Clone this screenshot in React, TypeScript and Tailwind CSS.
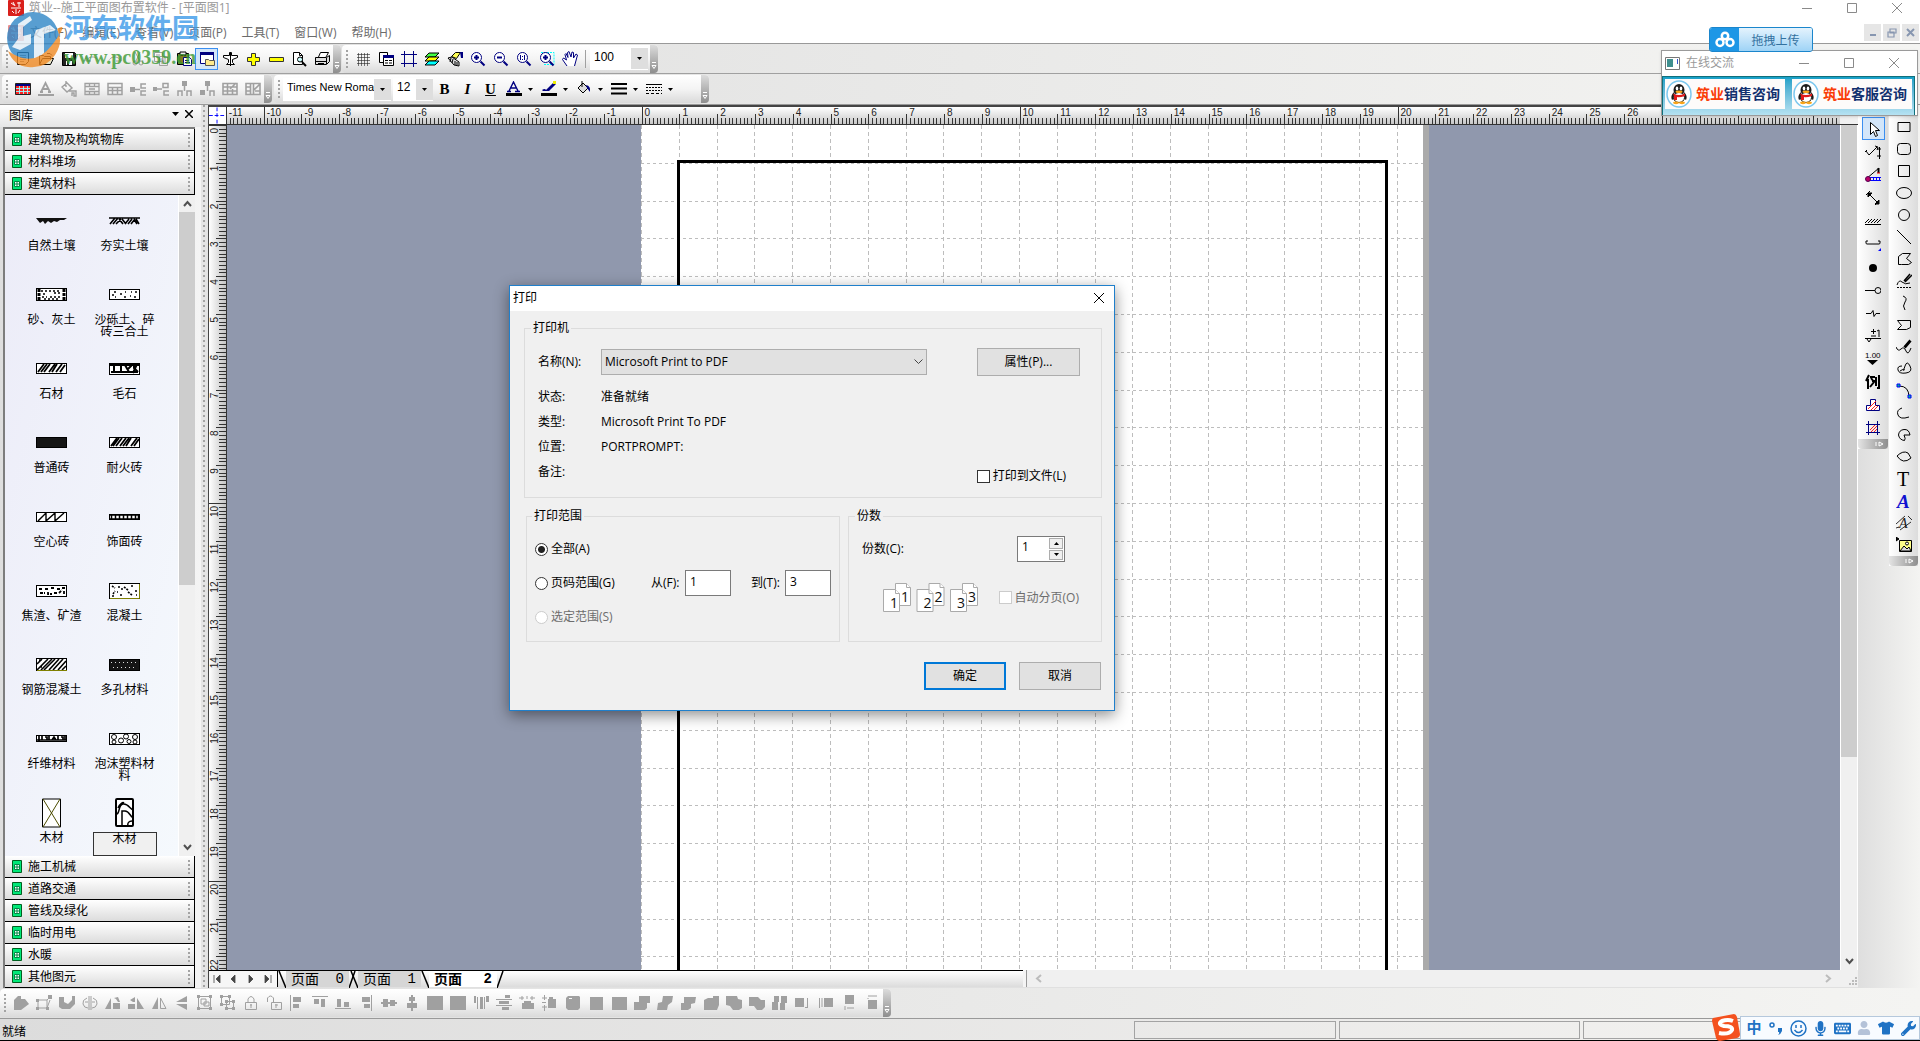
import React from 'react';
import { FaMicrophone, FaKeyboard, FaTshirt, FaWrench, FaUser } from 'react-icons/fa';

const CM = 37.795;

const Ico = ({ children, w = 16, h = 16 }: { children: React.ReactNode; w?: number; h?: number }) => (
  <svg width={w} height={h} viewBox={`0 0 ${w} ${h}`} fill="none" stroke="#000" className="shrink-0">
    {children}
  </svg>
);

const G = '#a0a0a0';
const NAVY = '#000080';

const ToolButton = ({ label, active, children }: { label: string; active?: boolean; children: React.ReactNode }) => (
  <button
    type="button"
    aria-label={label}
    className={`flex h-[22px] w-[23px] shrink-0 items-center justify-center ${active ? 'border border-[#3c8ff0] bg-[#d3e6fa]' : ''}`}
  >
    {children}
  </button>
);

const Grip = () => (
  <div className="flex w-[9px] shrink-0 flex-col items-center gap-[2px]">
    {[0, 1, 2, 3, 4].map((i) => (
      <span key={i} className="h-[2px] w-[2px] bg-[#a3a3a3]" />
    ))}
  </div>
);

const StripEnd = () => (
  <div className="flex h-full w-2 shrink-0 items-end justify-center rounded-r-sm bg-linear-to-b from-[#dcdcdc] to-[#8e8e8e] pb-[3px]">
    <svg width="6" height="8" viewBox="0 0 6 8" fill="none" stroke="#fff">
      <path d="M1 .5h4M1 3.500h4l-2 3z" />
    </svg>
  </div>
);

const Strip = ({ children }: { children: React.ReactNode }) => (
  <div className="flex h-[28px] items-center rounded bg-linear-to-b from-white via-[#f4f4f4] to-[#dadada]">
    <Grip />
    {children}
    <StripEnd />
  </div>
);

const Caret = () => (
  <svg width="5" height="3" viewBox="0 0 5 3">
    <path d="M0 0h5L2.500 3z" fill="#000" />
  </svg>
);

const Combo = ({ label, value, className }: { label: string; value: string; className: string }) => (
  <div className={`relative h-[23px] shrink-0 bg-white ${className}`}>
    <select
      aria-label={label}
      className="h-full w-full appearance-none overflow-hidden bg-white pr-[17px] pb-1 pl-1 leading-4"
    >
      <option>{value}</option>
    </select>
    <span className="pointer-events-none absolute inset-y-px right-0 flex w-[17px] items-center justify-center bg-[#dedede]">
      <Caret />
    </span>
  </div>
);

const FILE_TOOLS: { label: string; active?: boolean; icon: React.ReactNode }[] = [
  { label: '新建', icon: <g><path d="M2.500 1.500h11v9l-3 3h-8z" fill="#fff" /><path d="M5 4.500h6M5 6.500h6M5 8.500h6M5 10.500h4" stroke="#888" /></g> },
  { label: '打开', icon: <g><path d="M1.500 13.500v-9h4l1 1h6v3M1.500 13.500l3-6h11l-3 6z" fill="#e6e3c8" /><path d="M9 2.500h3l2 2" /></g> },
  { label: '保存', icon: <g><path d="M1.500 1.500h12l1 1v12h-13z" fill="#222" /><path d="M4 2h8v5H4zM5 10h6v4H5z" fill="#fff" stroke="none" /><path d="M6 10h2v4H6z" fill="#222" stroke="none" /></g> },
  { label: '撤销', icon: <path d="M2 5v5h5M2.500 9.500c2-4 8-5 11-1" stroke={G} /> },
  { label: '重做', icon: <path d="M14 5v5H9M13.500 9.500c-2-4-8-5-11-1" stroke={G} /> },
  { label: '剪切', icon: <path d="M5 1l5 9M10 1L6 10M3 12a2 2 0 104 0 2 2 0 10-4 0M9 12a2 2 0 104 0 2 2 0 10-4 0" stroke={G} /> },
  { label: '复制', icon: <path d="M1.500 1.500h8v9h-8zM6.500 5.500h8v9h-8zM3 4h4M3 6h3M8 8h5M8 10h5M8 12h5" stroke={G} /> },
  { label: '粘贴', icon: <g><path d="M1.500 2.500h11v11h-11z" fill="#807a20" /><path d="M4 1h6v3H4z" fill="#eee" /><path d="M7.500 6.500h6l2 2v6h-8z" fill="#fff" stroke={NAVY} /><path d="M9 9.500h4M9 11.500h5" stroke={NAVY} /></g> },
  { label: '图库窗口', active: true, icon: <g><path d="M1.500 1.500h13v11h-13z" fill="#fff" stroke={NAVY} /><path d="M1 1h14v3H1z" fill={NAVY} stroke="none" /><path d="M6.500 14.500v-6h3l1 1h5v5z" fill="#ffe98a" stroke="#555" /></g> },
  { label: '飞机', icon: <path d="M7.500 1.500h2v3h6v2l-5 2v3l2 2h-8l2-2v-3l-5-2v-2h6zM8.500 1v14" fill="#fff" /> },
  { label: '放大步进', icon: <path d="M6.500 2.500h4v4h4v4h-4v4h-4v-4h-4v-4h4z" fill="#ff0" stroke="#333" /> },
  { label: '缩小步进', icon: <path d="M1.500 6.500h14v4h-14z" fill="#ff0" stroke="#333" /> },
  { label: '打印预览', icon: <g><path d="M2.500 1.500h6l3 3v9h-9z" fill="#fff" /><path d="M8.500 1.500v3h3" /><circle cx="9" cy="8.500" r="2.500" fill="#cff" /><path d="M11 11l4 4" strokeWidth="2" /></g> },
  { label: '打印', icon: <g><path d="M4.500 6l2-4.500h8L12 6" fill="#fff" /><path d="M1.500 6.500h11l3-2v6l-3 3h-11z" fill="#ddd" /><path d="M2 10.500h10M4 12.500h6M12.500 7v6" /></g> },
];

const VIEW_TOOLS: { label: string; icon: React.ReactNode }[] = [
  { label: '网格', icon: <path d="M3.500 2v13M6.500 2v13M9.500 2v13M12.500 2v13M2 3.500h13M2 6.500h13M2 9.500h13M2 12.500h13" stroke="#222" strokeWidth=".6" /> },
  { label: '图层属性', icon: <g><path d="M1.500 1.500h8v10h-8z" fill="#fff" /><path d="M5.500 4.500h10v10h-10z" fill="#fff" /><path d="M5 4h11v3H5z" fill={NAVY} stroke="none" /><path d="M7 9.500h3M11 9.500h3M7 12h3M11 12h3" /></g> },
  { label: '框线', icon: <path d="M3.500 0v16M12.500 0v16M0 3.500h16M0 12.500h16" stroke={NAVY} /> },
  { label: '图层', icon: <g><path d="M5 2h10l-4 4H1z" fill="#4f4" /><path d="M5 6h10l-4 4H1z" fill="#ff0" /><path d="M5 10h10l-4 4H1z" fill="#0ff" /></g> },
  { label: '格式', icon: <g><path d="M4.500 5.500l4-4h5l-4 6z" fill="#ff5" /><path d="M1 7l4-1 7 5v4l-5-1z" fill="#ddd" /><path d="M13 1h3v6h-2z" fill={NAVY} stroke="none" /><path d="M4 7l-1 4M6 8l-1 4M8 10v4M10 11v3" /></g> },
  { label: '放大', icon: <g stroke={NAVY}><circle cx="6.500" cy="6.500" r="5" fill="#fff" /><path d="M4 6.500h5M6.500 4v5M10.500 10.500l4 4" strokeWidth="2" /></g> },
  { label: '缩小', icon: <g stroke={NAVY}><circle cx="6.500" cy="6.500" r="5" fill="#fff" /><path d="M4 6.500h5M10.500 10.500l4 4" strokeWidth="2" /></g> },
  { label: '原始大小', icon: <g stroke={NAVY}><circle cx="6.500" cy="6.500" r="5" fill="#fff" /><path d="M4.500 4v5M6.500 5v1M6.500 8v1M8.500 4v5" /><path d="M10.500 10.500l4 4" strokeWidth="2" /></g> },
  { label: '窗口缩放', icon: <g stroke={NAVY}><path d="M2 1.500h13v12H4" stroke="#0ff" strokeDasharray="2 1" /><circle cx="6.500" cy="6.500" r="5" fill="#fff" /><path d="M4 6.500h5M6.500 4v5M10.500 10.500l4 4" strokeWidth="2" /></g> },
  { label: '平移', icon: <path d="M5 15L.5 8.500l1-1.500L4.500 9 3 3.500l1-1 2 4-.5-5 1.500-1L9 6l1-5 1.500.5L11.500 7l2.500-4 1.500 1L12.500 15" fill="#fff" stroke={NAVY} /> },
];

const TABLE_TOOLS: { label: string; icon: React.ReactNode }[] = [
  { label: '表格', icon: <g><path d="M.5 2.500h15v11H.5z" fill="#f22" stroke="#222" /><path d="M1 3h14v2H1z" fill={NAVY} stroke="none" /><path d="M1 7.500h14M1 10.500h14M4.500 5v8M8.500 5v8M12.500 5v8" stroke="#9ff" strokeWidth=".9" /></g> },
  { label: '字体颜色', icon: <path d="M3 11L7.500 2 12 11M4.500 8h6M2 11h3M10 11h3M0 14h16" stroke={G} strokeWidth="1.800" /> },
  { label: '填充', icon: <path d="M1 6l5-4 5 5-5 4zM8 10h7v5h-2v-3h-2v3M5 0v6" stroke={G} strokeWidth="1.400" /> },
  { label: '合并', icon: <path d="M1 2.500h14v11H1zM1 5.500h14M1 10.500h14M5.500 2v4M10.500 2v4M5.500 10v4M10.500 10v4M5 8h6" stroke={G} strokeWidth="1.300" /> },
  { label: '拆分', icon: <path d="M1 2.500h14v11H1zM1 6.500h14M1 9.500h14M5.500 6v8M10.500 6v8" stroke={G} strokeWidth="1.500" /> },
  { label: '左插入', icon: <g stroke={G} strokeWidth="1.500"><path d="M0 6h5v5H0z" fill={G} stroke="none" /><path d="M4 8.500h6M16 3h-5v4h5M16 10h-5v4h5" /></g> },
  { label: '右插入', icon: <g stroke={G} strokeWidth="1.500"><path d="M0 6h4v4H0z" fill={G} stroke="none" /><path d="M4 8h5M10 2.500h5v4h-5zM16 10h-5v4h5" /></g> },
  { label: '上插入', icon: <g stroke={G} strokeWidth="1.500"><path d="M6 0h5v5H6z" fill={G} stroke="none" /><path d="M8.500 5v5M2 15v-5h4v5M11 15v-5h4v5" /></g> },
  { label: '下插入', icon: <g stroke={G} strokeWidth="1.500"><path d="M6 0h5v5H6zM1 9h5v5H1z" fill={G} stroke="none" /><path d="M8.500 5v5M11 15v-5h4v5" /></g> },
  { label: '编辑行', icon: <path d="M1 2.500h14v11H1zM1 6h14M1 10h14M5.500 3v10M10.500 8v6M8 8l6-6" stroke={G} strokeWidth="1.600" /> },
  { label: '编辑列', icon: <path d="M1 2.500h14v11H1zM5.500 2v12M8.500 2v12M1 6h5M1 10h5M9 9l6-6M10 10h5" stroke={G} strokeWidth="1.600" /> },
];

// arrange toolbar, all disabled: f is filled, s is stroked
const ARRANGE: { label: string; f?: string; s?: string }[] = [
  { label: '编辑形状', f: 'M1 5l4-4h3v3h4l4 5-4 3-4 3H1z' },
  { label: '节点', f: 'M12 0h4v4h-4zM0 4h3v3H0zM0 12h3v3H0zM10 12h3v3h-3z', s: 'M2 5h9v8H2zM11 5l3-3M11 13l3-8' },
  { label: '切角', f: 'M0 2h5v5l4 2 4-4V1h3v8l-5 5H3L0 12z' },
  { label: '任意旋转', s: 'M7 1v14M9 1v14M5 3Q0 5 1 9t5 4M11 3q5 2 4 6t-5 4M3 7h3M10 7h3' },
  { label: '左旋', f: 'M0 14L6 3v11zM8 8h7v6H8zM9 3l4-1 2 5h-2l-2-3z' },
  { label: '右旋', f: 'M9 14V3l7 11zM0 9h7v5H0zM2 5l5-3v5H5z' },
  { label: '水平翻转', f: 'M1 14L7 2v12z', s: 'M9.500 3v10.500H15z' },
  { label: '垂直翻转', f: 'M13 1v6H2zM2 9h11v6z' },
  { label: '组合', f: 'M0 0h3v3H0zM12 0h3v3h-3zM0 12h3v3H0zM12 12h3v3h-3z', s: 'M1.500 1.500h12v12h-12zM4 4h5v5H4zM7 7h5v4H7z' },
  { label: '取消组合', f: 'M0 0h3v3H0zM8 0h3v3H8zM0 8h3v3H0zM5 5h3v3H5zM12 5h3v3h-3zM5 12h3v3H5zM12 12h3v3h-3z', s: 'M1.500 1.500h8v8h-8zM6.500 6.500h7v7h-7z' },
  { label: '锁定', s: 'M2.500 7.500h11v7h-11zM5 7V4q3-5 6 0v3M8 9v4M7 10h2' },
  { label: '解锁', s: 'M5.500 7.500h10v7h-10zM1.500 7V3q3-4 6 0v4M10 9v4M9 10h3' },
  { label: '左对齐', f: 'M1 0h1v16H1zM4 2h8v5H4zM4 9h6v4H4z' },
  { label: '顶对齐', f: 'M0 1h16v1H0zM2 4h5v5H2zM9 4h4v8H9z' },
  { label: '底对齐', f: 'M0 13h16v1H0zM2 4h4v8H2zM9 7h5v5H9z' },
  { label: '右对齐', f: 'M13 0h1v16h-1zM4 2h8v5H4zM6 9h6v4H6z' },
  { label: '水平居中', f: 'M0 7h16v2H0zM2 4h5v8H2zM9 5h5v6H9z' },
  { label: '垂直居中', f: 'M7 0h2v16H7zM5 2h6v4H5zM3 8h10v5H3z' },
  { label: '填充一', f: 'M0 1h16v14H0z' },
  { label: '填充二', f: 'M0 1h16v14H0z' },
  { label: '水平分布', f: 'M1 1h2v7H1zM7 2h3v12H7zM13 1h3v6h-3z', s: 'M4.500 2v12M11.500 2v12' },
  { label: '垂直分布', f: 'M9 0h5v3H9zM3 6h10v3H3zM6 12h7v3H6z', s: 'M0 4.500h16M0 10.500h16' },
  { label: '等宽', f: 'M5 6h7v2h3v6H3V8h2z', s: 'M0 3h5M11 3h5M3 1v4M13 1v4M8 1v3' },
  { label: '等高', f: 'M7 2h4v2h3v9H6V4h1z', s: 'M2.500 0v5M0 3h5M2.500 10v6M0 12h5M0 7.500h4' },
  { label: '等大', f: 'M1 3l2-2h11l1 1v11l-2 2H3l-2-2zM4 3v1h3V3z' },
  { label: '方形', f: 'M2 2h13v13H2z' },
  { label: '方形二', f: 'M1 2h15v13H1z' },
  { label: '联合', f: 'M5 1h11v7h-3v5l-2 2H0V7h5z' },
  { label: '组合形', f: 'M6 1h10l-1 6-4 3-1 5H0l1-7 4-1z' },
  { label: '拆分形', f: 'M4 2h12l-1 6-4 1v4l-3 2H1V8h3z' },
  { label: '相交', f: 'M5 3h5V1h6v9l-2 5H1V5z' },
  { label: '剪除', f: 'M0 1h11l1 3 4 1v8l-3 2H7l-3-4-4-1z' },
  { label: '切除', f: 'M0 2h9l3 3h4v7l-3 3H8l-3-4H0z' },
  { label: '打断', f: 'M2 1h5v6H6v8H0V7h2zM9 1h6v7h-2v7H8V8h1z' },
  { label: '右移', f: 'M0 3h9v9H0z', s: 'M12.500 3v10M10 12.500h3' },
  { label: '左移', f: 'M6 3h9v9H6z', s: 'M1.500 3v10M4 3v9' },
  { label: '下移', f: 'M4 0h9v9H4z', s: 'M4 11v4M6 13h7' },
  { label: '上移', f: 'M4 5h9v9H4z', s: 'M4 1h9M4 3v1' },
];

const LIBRARIES_TOP = ['建筑物及构筑物库', '材料堆场', '建筑材料'];
const LIBRARIES_BOTTOM = ['施工机械', '道路交通', '管线及绿化', '临时用电', '水暖', '其他图元'];

const Box = ({ children, h = 10, fill = '#fff' }: { children?: React.ReactNode; h?: number; fill?: string }) => (
  <g>
    <rect x=".5" y=".5" width="30" height={h} fill={fill} />
    {children}
  </g>
);

const MATERIALS: { name: string; w?: number; h?: number; selected?: boolean; art: React.ReactNode }[] = [
  { name: '自然土壤', h: 6, art: <path d="M0 0h31l-3 2h-4l-3 2-3-1-3 2-3-2-3 3-2-3-3 2z" fill="#111" stroke="none" /> },
  { name: '夯实土壤', h: 8, art: <path d="M0 1h31M1 7l5-6M4 7l5-6M7 7l5-5M10 2l4 5M13 2l4 5M16 7l4-5M19 7l4-5M22 7l4-5M27 2l3 5M25 2l3 5" strokeWidth="1.600" /> },
  { name: '砂、灰土', h: 13, art: <Box h={12}><path d="M3 1v11M28 1v11" strokeWidth="3" strokeDasharray="3 1" /><path d="M5 3h20M7 6h4M18 5h6M6 9h5M14 9h10M8 11h16" strokeWidth="1.600" strokeDasharray="2 2" /></Box> },
  { name: '沙砾土、碎砖三合土', h: 11, art: <Box><path d="M5 3h2M3 6h2M11 5h2M15 8h2M16 3h1M22 3h1M21 7h1M26 3h2M25 8h2M6 8h1" strokeWidth="1.400" /></Box> },
  { name: '石材', h: 11, art: <Box><path d="M2 9l6-8M5 9l6-8M8 9l6-8M13 9l6-8M16 9l5-8M20 9l6-8M24 9l5-7" strokeWidth="1.800" /></Box> },
  { name: '毛石', h: 12, art: <Box h={11}><path d="M1 2h29M2 9h27M5 1v9M12 2v8M16 2l4 7M23 2l-5 5M25 2v3l4 4M28 1l-4 9" strokeWidth="2" /></Box> },
  { name: '普通砖', h: 11, art: <Box fill="#151515" /> },
  { name: '耐火砖', h: 11, art: <Box><path d="M2 9l6-8M4 9l6-8M7 9l6-8M11 9l6-8M14 9l6-8M17 9l5-8M22 9l6-8M25 9l5-7" strokeWidth="1.800" /></Box> },
  { name: '空心砖', h: 10, art: <Box h={9}><path d="M2 9l8-8v8l9-8v8l9-8" strokeWidth="1.400" /></Box> },
  { name: '饰面砖', h: 6, art: <Box h={5}><path d="M2.500 0v5M6.500 0v5M10.500 0v5M14.500 0v5M18.500 0v5M22.500 0v5M26.500 0v5M29.500 0v5M0 1h31M0 5h31" strokeWidth="1.500" /></Box> },
  { name: '焦渣、矿渣', h: 12, art: <Box h={11}><path d="M3 4h4M9 4h4M15 3h3M21 4h3M26 3h3M4 8h5M12 7v2h4M18 8h3M23 8l3-3M28 6v3" strokeWidth="1.800" strokeDasharray="3 1" /></Box> },
  { name: '混凝土', h: 16, art: <Box h={15}><path d="M3 3l3 2M9 4h2M15 4l4 3M22 3h3M4 11l2-3M12 6h2M11 12h2M19 9l4 3M26 8h3M27 12h1M3 13h2M8 9h1" strokeWidth="1.600" strokeDasharray="2 1" /><path d="M1 15.500h29.500V1" stroke="#808000" /></Box> },
  { name: '钢筋混凝土', h: 13, art: <Box h={12}><path d="M1 6l5-5M1 12L12 1M5 12L16 1M8 12L19 1M13 12L23 1M17 12L27 1M22 12l8-9M26 12l4-4M3 2h3M4 9h2" strokeWidth="1.600" /><path d="M1 12.500h30" stroke="#808000" /></Box> },
  { name: '多孔材料', h: 12, art: <Box h={11} fill="#151515"><path d="M2 3.500h27M4 8.500h24" stroke="#ddd" strokeDasharray="1 3" /></Box> },
  { name: '纤维材料', h: 7, art: <Box h={6}><path d="M3 1v5M6 1v4M9 2h2v3h2V1M16 5l2-3 2 3M22 1v4M25 2h2v3h2V1M1 5h29" strokeWidth="1.700" /></Box> },
  { name: '泡沫塑料材料', h: 12, art: <Box h={11}><circle cx="5" cy="4" r="2.500" /><circle cx="12" cy="7.500" r="2.500" /><circle cx="17" cy="3.500" r="2.500" /><circle cx="20" cy="8.500" r="2" /><circle cx="26" cy="4" r="2.500" /><circle cx="5" cy="9" r="2" /><circle cx="26" cy="9" r="2" /></Box> },
  { name: '木材', w: 20, h: 30, art: <g><path d="M.5 1h18v28H.5z" fill="#fff" /><path d="M1 1l17 28M18 1L1 29" stroke="#4c4c00" /></g> },
  { name: '木材', w: 20, h: 30, selected: true, art: <g><rect x="1" y="1" width="17" height="27" rx="1" fill="#fff" strokeWidth="2" /><path d="M2 16c3-1 1-9 6-10s7 5 10 6M7 28V13h3c4 0 5 5 8 7M13 28c-1-3 1-5 4-5M3 10c2-5 5-6 6-5" strokeWidth="1.500" /></g> },
];

const Crane = (
  <g>
    <path d="M1 12L14 1" />
    <path d="M2 10.500h14M4 13.500h12" stroke="#00f" />
    <path d="M5 12h11" stroke="#00f" strokeWidth="2" strokeDasharray="1 2" />
    <circle cx="3" cy="12" r="2.500" fill="#b06" stroke="#505" />
    <path d="M13.500 1v5" strokeWidth="2" />
    <path d="M12 6h3" stroke="#e00" />
  </g>
);

const DRAW_TOOLS: { label: string; icon: React.ReactNode }[] = [
  { label: '选择', icon: <path d="M5.500 1.500v12l3-3 2 5 2-1-2-5h4z" fill="#fff" /> },
  { label: '折线标注', icon: <path d="M1 7l3 4 8-8M10 2l3 1-1 3M14.500 3v12M12 5h4M12 12h4M0 8l2-2" /> },
  { label: '塔吊', icon: Crane },
  { label: '尺寸', icon: <g><path d="M4 4l9 9M1 5l4-4M10 15l4-4" /><path d="M3 3h4L3 7zM14 14h-4l4-4z" fill="#000" /></g> },
  { label: '填土', icon: <path d="M0 11.500h16M0 10l4-4M3 10l4-4M6 10l4-4M9 10l4-4M12 10l4-4" /> },
  { label: '围墙', icon: <g><path d="M1 5v2q0 1 1 1h12q1 0 1-1V5M1 5h2M13 5h2" /><path d="M16 12v3h-3z" fill="#00f" stroke="none" /></g> },
  { label: '圆点', icon: <circle cx="8" cy="9" r="4" fill="#000" stroke="none" /> },
  { label: '接点', icon: <path d="M0 8.500h10M10 8.500a3 3 0 106 0 3 3 0 10-6 0" /> },
  { label: '断线', icon: <path d="M1 8.500h5l2-3 1 6 2-3h4" /> },
  { label: '正负标高', icon: <path d="M0 10.500h16M2 11l2 3 2-3M6 3.500h5M8.500 1v5M6 8h5M12 3l2-1v7" /> },
  { label: '标高', icon: <g><text x="0" y="7" fontSize="8" fontFamily="Liberation Sans, sans-serif" fill="#000" stroke="none">1.00</text><path d="M2 9h11l-5.500 5z" fill="#000" stroke="none" /></g> },
  { label: '图例', icon: <path d="M4 1L1 7M3 5v10M5 3h5M6 4l3 4-4 5M7 7h3M11 3v9M14 1v13h-2" strokeWidth="2" /> },
  { label: '楼栋', icon: <g stroke={NAVY}><path d="M5.500 2.500h5v6h4v5h-13v-5h4z" fill="#fff" /><path d="M3 12l8-8M6 13l5-5M9 13l4-4" stroke="#f22" /></g> },
  { label: '轴网', icon: <g stroke={NAVY}><path d="M3.500 1v14M12.500 1v14M1 4.500h14M1 12.500h14" /><path d="M5 10l5-5M6 12l6-6M9 12l3-3" stroke="#f22" /></g> },
];

const SHAPE_TOOLS: { label: string; icon: React.ReactNode }[] = [
  { label: '矩形', icon: <path d="M2 3.500h12v9H2z" /> },
  { label: '圆角矩形', icon: <rect x="1.500" y="2.500" width="13" height="11" rx="3" /> },
  { label: '正方形', icon: <path d="M2.500 2.500h11v11h-11z" /> },
  { label: '椭圆', icon: <ellipse cx="8" cy="8" rx="7.500" ry="5.500" fill="#eee" /> },
  { label: '圆', icon: <circle cx="8" cy="8" r="5.500" /> },
  { label: '直线', icon: <path d="M1 1l14 14" /> },
  { label: '多边形', icon: <path d="M2.500 13.500v-8l4-3h8l-4 5 5 4-3 2h-7z" /> },
  { label: '自由曲线', icon: <g><path d="M1 12q2-6 5-3t8 1" /><path d="M8 8l6-7M9 9l7-7" strokeWidth="1.500" /><path d="M1 14.500h14" strokeDasharray="2 1" /></g> },
  { label: '曲线', icon: <path d="M7 1q5 2 2 6t0 8" /> },
  { label: '旗形', icon: <path d="M1.500 3.500h13v7l-4 2h-9l4-4z" /> },
  { label: '画笔', icon: <g><path d="M0 8q2 5 5 2t5 2 5-3" /><path d="M8 8l6-7M9 9l6-7" strokeWidth="1.500" /></g> },
  { label: '闭合曲线', icon: <path d="M6 5Q1 5 2 9t8 3 4-7-5 0-1 4-4 1" /> },
  { label: '圆弧', icon: <g><path d="M3 3q10 0 10 11" /><path d="M1 1h3v3H1zM12 12h3v3h-3z" fill="#0b8" stroke="#00f" /></g> },
  { label: '弧', icon: <path d="M6 3Q0 5 2 10t11 2" /> },
  { label: '扇形', icon: <path d="M8 8h6Q13 2 8 2.500T2.500 8q1 5 6 5.500Q10 12 8 8z" /> },
  { label: '弓形', icon: <path d="M1 7q6-6 11-3l3 5q-8 7-14-2z" fill="#eee" /> },
  { label: '文字', icon: <text x="1" y="15" fontSize="20" fontFamily="Liberation Serif, serif" fill="#000" stroke="none">T</text> },
  { label: '艺术字', icon: <text x="1" y="15" fontSize="19" fontWeight="bold" fontStyle="italic" fontFamily="Liberation Serif, serif" fill="#1010d0" stroke="none">A</text> },
  { label: '旋转文字', icon: <g><text x="3" y="13" fontSize="14" fontStyle="italic" fontFamily="Liberation Serif, serif" fill="#222" stroke="none">A</text><path d="M0 9l9-8M4 15l11-8M3 12l-3 1M12 1l4 4" strokeWidth=".8" /></g> },
  { label: '图片', icon: <g><path d="M3.500 3.500h12v11h-12z" fill="#ff8" /><circle cx="11" cy="6.500" r="1.500" fill="#fff" /><path d="M4 14l4-5 3 3 2-2 2 4z" fill="#ddd" /><path d="M0 0v4l3-2z" fill="#000" /></g> },
];

const TopRuler = () => {
  const zero = 414.6;
  const ticks: string[] = [];
  for (let i = -120; i < 440; i++) {
    const x = Math.round(zero + (i * CM) / 10) + 0.5;
    const top = i % 100 === 0 ? 0 : i % 10 === 0 ? 7 : 11;
    ticks.push(`M${x} ${top}V18`);
  }
  return (
    <svg className="h-[18px] min-w-0 flex-1" role="img" aria-label="水平标尺">
      <path d={ticks.join('')} stroke="#333" fill="none" />
      {Array.from({ length: 42 }, (_, k) => k - 11).map((n) => (
        <text key={n} x={zero + n * CM + 3} y="9" fontSize="10" fontFamily="Liberation Sans, sans-serif" fill="#222">
          {n}
        </text>
      ))}
    </svg>
  );
};

const SideRuler = () => {
  const ticks: string[] = [];
  for (let i = 0; i < 400; i++) {
    const y = Math.round((i * CM) / 10) + 0.5;
    const left = i % 100 === 0 ? 0 : i % 10 === 0 ? 7 : 10;
    ticks.push(`M${left} ${y}H18`);
  }
  return (
    <svg className="h-full w-[17px] shrink-0 bg-linear-to-r from-white to-[#c4c4c4]" role="img" aria-label="垂直标尺">
      <path d={ticks.join('')} stroke="#333" fill="none" />
      {Array.from({ length: 23 }, (_, n) => (
        <text
          key={n}
          transform={`translate(9 ${n * CM + 3}) rotate(-90)`}
          textAnchor="end"
          fontSize="10"
          fontFamily="Liberation Sans, sans-serif"
          fill="#222"
        >
          {n}
        </text>
      ))}
    </svg>
  );
};

const Sheet = () => {
  const vLines = Array.from({ length: 21 }, (_, i) => Math.round(i * CM) + 0.5);
  const hLines = Array.from({ length: 29 }, (_, i) => Math.round((i + 1) * CM) + 0.5);
  return (
    <svg className="ml-[414px] h-full w-[788px] shrink-0" role="img" aria-label="图纸">
      <rect width="782" height="100%" fill="#fff" />
      <rect x="782" width="6" height="100%" fill="#aaa" />
      {vLines.map((x) => (
        <line key={x} x1={x} x2={x} y1="0" y2="1200" stroke="#bdbdbd" strokeDasharray="4 3" />
      ))}
      {hLines.map((y) => (
        <line key={y} x1="0" x2="782" y1={y} y2={y} stroke="#bdbdbd" strokeDasharray="3 3" />
      ))}
      <rect x="37.500" y="36.500" width="708" height="1048" fill="none" stroke="#000" strokeWidth="3" />
    </svg>
  );
};

const LibraryRow = ({ name }: { name: string }) => (
  <button
    type="button"
    className="flex h-[22px] w-full shrink-0 items-center border-r border-b border-black bg-linear-to-b from-white to-[#dcdcdc] pr-1 pl-[7px] text-left text-[12px] leading-4"
  >
    <svg width="10" height="13" viewBox="0 0 10 13" className="mr-[6px]">
      <path d="M.5.5h9v12h-9z" fill="#00e878" stroke="#006020" />
      <path d="M2.500 4.500h5v5h-5z" fill="#fff" stroke="#084" />
      <path d="M5 4v5M2 7h6" stroke="#084" />
    </svg>
    <span className="flex-1">{name}</span>
    <span className="flex flex-col gap-[2px]">
      {[0, 1, 2, 3].map((i) => (
        <span key={i} className="h-[2px] w-[2px] bg-[#a3a3a3]" />
      ))}
    </span>
  </button>
);

const Chevron = ({ d, color = '#505050' }: { d: string; color?: string }) => (
  <svg width="9" height="9" viewBox="0 0 9 9" fill="none" stroke={color} strokeWidth="2">
    <path d={d} />
  </svg>
);

const LibraryPanel = () => (
  <aside className="flex w-[201px] shrink-0 flex-col bg-linear-to-r from-[#dedede] to-[#f4f4f4]">
    <div className="flex h-[22px] shrink-0 items-center bg-linear-to-b from-white to-[#e6e6e6] pr-2 pl-[9px] text-[12px] leading-4">
      <h2 className="flex-1">图库</h2>
      <button type="button" aria-label="选项" className="pr-[6px] pb-1">
        <svg width="7" height="4" viewBox="0 0 7 4"><path d="M0 0h7L3.500 4z" /></svg>
      </button>
      <button type="button" aria-label="关闭图库" className="pb-1">
        <svg width="8" height="8" viewBox="0 0 8 8" stroke="#000" strokeWidth="1.500"><path d="M0 0l8 8M8 0L0 8" /></svg>
      </button>
    </div>
    <div className="mr-[6px] ml-[3px] flex min-h-0 flex-1 flex-col border-t-2 border-l-2 border-[#7d7d7d]">
      {LIBRARIES_TOP.map((n) => <LibraryRow key={n} name={n} />)}
      <div className="flex min-h-0 flex-1">
        <div className="grid min-w-0 flex-1 auto-rows-[74px] grid-cols-[73px_73px] content-start justify-items-center overflow-hidden bg-linear-to-br from-[#ececf8] to-[#f5f9fd] pl-[10px]">
          {MATERIALS.map((m, i) => (
            <button type="button" key={i} className="flex w-16 flex-col items-center text-[12px] leading-3">
              <span className="flex h-[45px] items-center pt-[6px]">
                <Ico w={m.w ?? 31} h={m.h ?? 12}>{m.art}</Ico>
              </span>
              <span className={m.selected ? 'h-6 w-full border border-[#333] bg-[#f0f0f0]' : 'w-[60px]'}>{m.name}</span>
            </button>
          ))}
        </div>
        <div className="flex w-[17px] shrink-0 flex-col items-center border-l border-white bg-[#f0f0f0]">
          <div className="flex h-[17px] shrink-0 items-center"><Chevron d="M1 7l3.500-4L8 7" /></div>
          <div className="w-full basis-[373px] bg-[#cdcdcd]" />
          <div className="min-h-0 flex-1" />
          <div className="flex h-[17px] shrink-0 items-center"><Chevron d="M1 2l3.500 4L8 2" /></div>
        </div>
      </div>
      {LIBRARIES_BOTTOM.map((n) => <LibraryRow key={n} name={n} />)}
    </div>
  </aside>
);

const PageTab = ({ n, active }: { n: number; active?: boolean }) => (
  <button type="button" className="flex h-full items-stretch">
    <svg width="8" height="17" viewBox="0 0 8 17" fill="none" stroke="#000" strokeWidth="1.500"><path d="M1 0l7 17" /></svg>
    <span className={`flex items-center justify-between px-[5px] text-[14px] leading-4 ${active ? 'w-[68px] bg-white font-bold' : 'w-[63px] bg-[#d6d6d6]'}`}>
      <span>页面</span>
      <span className="font-['Liberation_Mono',monospace]">{n}</span>
    </span>
    {(active || n === 0) && (
      <svg width="7" height="17" viewBox="0 0 7 17" fill="none" stroke="#000" strokeWidth="1.500" className="-mr-[6px]"><path d="M6 0L0 17" /></svg>
    )}
  </button>
);

const NAV_ARROWS = [
  { label: '第一页', d: 'M1 0v8M7 0v8L3 4z' },
  { label: '上一页', d: 'M5 0v8L1 4z' },
  { label: '下一页', d: 'M2 0v8l4-4z' },
  { label: '最后一页', d: 'M1 0v8l4-4zM7 0v8' },
];

const PageBar = () => (
  <div className="flex h-[18px] shrink-0 border-b border-[#e0e0e0]">
    <div className="flex h-full flex-1 items-stretch border-t border-black bg-linear-to-b from-white to-[#dcdcdc] pr-4">
      <div className="flex items-center border-r border-black bg-[#f6f6f6]">
        {NAV_ARROWS.map((a) => (
          <button type="button" key={a.label} aria-label={a.label} className="flex w-[17px] justify-start pl-1">
            <svg width="8" height="8" viewBox="0 0 8 8" fill="#444" stroke="#444" strokeWidth=".8"><path d={a.d} /></svg>
          </button>
        ))}
      </div>
      <PageTab n={0} />
      <PageTab n={1} />
      <PageTab n={2} active />
    </div>
    <div className="w-1 border-r border-[#999] bg-[#f4f4f4]" />
    <div className="flex flex-1 items-center justify-between bg-[#f0f0f0] px-2">
      <Chevron d="M6 1L2 4.500 6 8" color="#bcbcbc" />
      <Chevron d="M3 1l4 3.500L3 8" color="#bcbcbc" />
    </div>
    <div className="flex w-[18px] items-end justify-end bg-[#f0f0f0] p-px">
      <svg width="9" height="9" viewBox="0 0 9 9" fill="#bbb"><path d="M7 0h2v2H7zM7 3h2v2H7zM4 3h2v2H4zM7 6h2v2H7zM4 6h2v2H4zM1 6h2v2H1z" /></svg>
    </div>
  </div>
);

const Workspace = () => (
  <section className="flex min-w-0 flex-1 flex-col border-t-2 border-l border-[#444] bg-[#9098ad]">
    <div className="flex h-[18px] shrink-0 border-b border-[#333] bg-linear-to-b from-white to-[#c8c8c8]">
      <svg width="18" height="17" viewBox="0 0 18 17" className="shrink-0 border-r border-[#333] bg-white" stroke="#00f" fill="none">
        <path d="M0 8.500h5M12 8.500h5M8.500 0v4M8.500 13v4M6 8.500h5M8.500 6v5" strokeDasharray="4 1" />
      </svg>
      <TopRuler />
      <div className="w-[18px] bg-[#f0f0f0]" />
    </div>
    <div className="flex min-h-0 flex-1">
      <SideRuler />
      <div className="flex min-w-0 flex-1 overflow-hidden border-l border-[#333]">
        <Sheet />
      </div>
      <div className="flex w-[18px] shrink-0 flex-col items-center border-x border-white bg-[#f0f0f0]">
        <div className="w-full basis-[632px] bg-[#cdcdcd]" />
        <div className="min-h-0 flex-1" />
        <div className="flex h-[17px] shrink-0 items-center"><Chevron d="M1 2l3.500 4L8 2" /></div>
      </div>
    </div>
    <PageBar />
  </section>
);

const SideGrip = () => (
  <div className="flex h-[10px] w-full items-center justify-end rounded-b bg-linear-to-r from-[#e4e4e4] to-[#8e8e8e] pr-1">
    <svg width="9" height="6" viewBox="0 0 9 6" stroke="#fff" fill="none"><path d="M1 1v4M4 1v4l4-2z" /></svg>
  </div>
);

const RadioRow = ({ id, text, disabled, checked, children }: { id: string; text: string; disabled?: boolean; checked?: boolean; children?: React.ReactNode }) => (
  <div className="flex h-[34px] items-center">
    <input
      id={id}
      type="radio"
      name="range"
      defaultChecked={checked}
      disabled={disabled}
      className="mr-[3px] h-[13px] w-[13px] appearance-none rounded-full border border-[#333] bg-white checked:bg-[radial-gradient(circle,#222_0_3px,#fff_4px)] disabled:border-[#ccc]"
    />
    <label htmlFor={id} className={`w-[100px] ${disabled ? 'text-[#6d6d6d]' : ''}`}>{text}</label>
    {children}
  </div>
);

const CollatePages = () => (
  <svg width="100" height="31" viewBox="0 0 100 31" role="img" aria-label="逐份打印示意">
    {[0, 1, 2].map((i) => (
      <g key={i} transform={`translate(${i * 33.5} 0)`} stroke="#aaa" fill="#fff" fontFamily="Open Sans, sans-serif" fontSize="14">
        <path d="M13.500 1.500h11l4 4v18h-15z" />
        <path d="M24.500 1.500v4h4" />
        <text x="19" y="20" fill="#111" stroke="none">{i + 1}</text>
        <path d="M1.500 7.500h12l4 4v18h-16z" />
        <path d="M13.500 7.500v4h4" />
        <text x="8" y="26" fill="#111" stroke="none">{i + 1}</text>
      </g>
    ))}
  </svg>
);

const PRINTER_INFO = [
  { k: '状态:', v: '准备就绪' },
  { k: '类型:', v: 'Microsoft Print To PDF' },
  { k: '位置:', v: 'PORTPROMPT:' },
];

const PrintDialog = () => (
  <div
    role="dialog"
    aria-label="打印"
    className="absolute top-[285px] left-[509px] w-[606px] border border-[#1f7fcb] bg-[#f0f0f0] font-['Open_Sans','Noto_Sans_CJK_SC',sans-serif] text-[12px] leading-4 shadow-[0_4px_14px_rgba(0,0,0,0.45)]"
  >
    <div className="flex h-[25px] items-center justify-between bg-white pr-[9px] pb-[2px] pl-[3px]">
      <h2>打印</h2>
      <button type="button" aria-label="关闭">
        <svg width="12" height="12" viewBox="0 0 12 12" stroke="#000"><path d="M1 1l10 10M11 1L1 11" /></svg>
      </button>
    </div>
    <form className="pt-[9px] pr-3 pb-5 pl-[14px]" onSubmit={(e) => e.preventDefault()}>
      <fieldset className="border border-[#dcdcdc] pr-[21px] pb-2 pl-[13px]">
        <legend className="-ml-[7px] px-[2px]">打印机</legend>
        <div className="flex items-center pt-3">
          <label htmlFor="printer" className="w-[63px]">名称(N):</label>
          <div className="relative w-[326px]">
            <select id="printer" className="h-[26px] w-full appearance-none border border-[#adadad] bg-[#e1e1e1] pl-[3px]">
              <option>Microsoft Print to PDF</option>
            </select>
            <svg width="9" height="6" viewBox="0 0 9 6" fill="none" stroke="#444" className="pointer-events-none absolute top-[10px] right-1"><path d="M.5.5l4 4 4-4" /></svg>
          </div>
          <button type="button" className="ml-auto h-7 w-[103px] border border-[#adadad] bg-[#e1e1e1]">属性(P)...</button>
        </div>
        <dl className="pt-2">
          {PRINTER_INFO.map((r) => (
            <div key={r.k} className="flex h-[25px] items-center">
              <dt className="w-[63px]">{r.k}</dt>
              <dd>{r.v}</dd>
            </div>
          ))}
        </dl>
        <div className="flex h-[30px] items-center justify-between pr-[14px]">
          <span className="pb-1">备注:</span>
          <label className="flex items-center gap-[3px] pt-1">
            <input type="checkbox" className="h-[13px] w-[13px] appearance-none border border-[#333] bg-white" />
            打印到文件(L)
          </label>
        </div>
      </fieldset>
      <div className="flex gap-2 pt-[10px] pl-[2px]">
        <fieldset className="w-[313px] border border-[#dcdcdc] px-2 pt-2 pb-[7px]">
          <legend className="-ml-[3px] px-[2px]">打印范围</legend>
          <RadioRow id="all" text="全部(A)" checked />
          <RadioRow id="pages" text="页码范围(G)">
            <label htmlFor="from" className="w-[34px]">从(F):</label>
            <input id="from" defaultValue="1" className="h-[26px] w-[46px] border border-[#7a7a7a] bg-white px-1 pb-1" />
            <label htmlFor="to" className="ml-5 w-[34px]">到(T):</label>
            <input id="to" defaultValue="3" className="h-[26px] w-[46px] border border-[#7a7a7a] bg-white px-1 pb-1" />
          </RadioRow>
          <RadioRow id="selection" text="选定范围(S)" disabled />
        </fieldset>
        <fieldset className="min-w-0 flex-1 border border-[#dcdcdc] pt-3 pr-[22px] pl-[13px]">
          <legend className="-ml-[7px] px-[2px]">份数</legend>
          <div className="flex items-center justify-between pr-[14px]">
            <label htmlFor="copies">份数(C):</label>
            <div className="flex h-[26px] w-12 border border-[#7a7a7a] bg-white">
              <input id="copies" defaultValue="1" className="min-w-0 flex-1 bg-transparent px-1 pb-1" />
              <div className="flex w-4 flex-col gap-px p-px">
                <button type="button" aria-label="增加" className="flex flex-1 items-center justify-center border border-[#adadad] bg-[#f0f0f0]">
                  <svg width="5" height="3" viewBox="0 0 5 3"><path d="M0 3h5L2.500 0z" /></svg>
                </button>
                <button type="button" aria-label="减少" className="flex flex-1 items-center justify-center border border-[#adadad] bg-[#f0f0f0]">
                  <Caret />
                </button>
              </div>
            </div>
          </div>
          <div className="flex items-center justify-between pt-5 pl-5">
            <CollatePages />
            <label className="flex items-center gap-[3px] text-[#6d6d6d]">
              <input type="checkbox" disabled className="h-[13px] w-[13px] appearance-none border border-[#ccc] bg-white" />
              自动分页(O)
            </label>
          </div>
        </fieldset>
      </div>
      <div className="flex justify-end gap-[13px] pt-5 pr-px">
        <button type="submit" className="h-7 w-[82px] border-2 border-[#0078d7] bg-[#e1e1e1]">确定</button>
        <button type="button" className="h-7 w-[82px] border border-[#adadad] bg-[#e1e1e1]">取消</button>
      </div>
    </form>
  </div>
);

const WindowControls = () => (
  <div className="flex items-center gap-[35px] text-[#8a8a8a]">
    <button type="button" aria-label="最小化"><svg width="10" height="10" viewBox="0 0 10 10" stroke="currentColor"><path d="M0 5.500h10" /></svg></button>
    <button type="button" aria-label="最大化"><svg width="10" height="10" viewBox="0 0 10 10" stroke="currentColor" fill="none"><path d="M.5.5h9v9h-9z" /></svg></button>
    <button type="button" aria-label="关闭窗口"><svg width="10" height="10" viewBox="0 0 10 10" stroke="currentColor"><path d="M0 0l10 10M10 0L0 10" /></svg></button>
  </div>
);

const Penguin = () => (
  <svg width="26" height="28" viewBox="0 0 26 28" className="shrink-0">
    <ellipse cx="13" cy="14" rx="12" ry="13" fill="#fff" stroke="#7cc7ee" strokeWidth="1.500" />
    <ellipse cx="13" cy="10" rx="5.500" ry="6" fill="#1c1c1c" />
    <path d="M8 12q-4 4-2 8l3-2M18 12q4 4 2 8l-3-2" fill="#1c1c1c" />
    <ellipse cx="13" cy="17.500" rx="5.500" ry="5" fill="#fff" stroke="#1c1c1c" />
    <ellipse cx="11" cy="8.500" rx="1.300" ry="1.900" fill="#fff" />
    <ellipse cx="15" cy="8.500" rx="1.300" ry="1.900" fill="#fff" />
    <ellipse cx="13" cy="11.800" rx="3.500" ry="1.200" fill="#f9a51a" />
    <path d="M7 13.500q6 3 12 0v2.500q-6 2-8 1v3H8v-4z" fill="#e11b1b" />
    <ellipse cx="10" cy="22.800" rx="3" ry="1.400" fill="#f9a51a" />
    <ellipse cx="16" cy="22.800" rx="3" ry="1.400" fill="#f9a51a" />
  </svg>
);

const ChatWindow = () => (
  <div className="absolute top-[50px] right-[2px] w-[257px] border border-[#9a9a9a] bg-white shadow">
    <div className="flex h-[25px] items-center justify-between pr-[18px] pb-px pl-[3px]">
      <div className="flex items-center gap-[6px] text-[12px] leading-4 text-[#9a9a9a]">
        <svg width="15" height="13" viewBox="0 0 15 13"><path d="M.5.5h14v12H.5z" fill="#fff" stroke="#777" /><path d="M2 2h6v8H2z" fill="#3f8f8f" /><path d="M12 2h1v5h-1z" fill="#35c" /></svg>
        在线交流
      </div>
      <WindowControls />
    </div>
    <div className="mr-[2px] flex h-[39px] gap-[7px] border-x border-t border-[#10707c] bg-linear-to-b from-[#12a0c8] to-[#b5e2f2] px-[2px] pt-[2px] pb-[6px]">
      {['销售咨询', '客服咨询'].map((t) => (
        <button type="button" key={t} className="flex flex-1 items-center justify-center gap-1 bg-[#fdfbfa] pr-1 text-[14px] leading-4 font-bold text-[#12306e]">
          <Penguin />
          <span><span className="text-[#fa3c05]">筑业</span>{t}</span>
        </button>
      ))}
    </div>
  </div>
);

const UploadBadge = () => (
  <button type="button" className="absolute top-[27px] left-[1709px] flex h-[25px] w-[104px] overflow-hidden rounded-[3px] border border-[#1b86cc] text-[12px] leading-4 text-[#33719f]">
    <span className="flex h-full w-[29px] items-center justify-center bg-[#1e97e6]">
      <svg width="20" height="17" viewBox="0 0 20 17" fill="none" stroke="#fff" strokeWidth="2.500"><circle cx="10" cy="5" r="3.200" /><circle cx="5" cy="11.500" r="3.500" /><circle cx="15" cy="11.500" r="3.500" /></svg>
    </span>
    <span className="flex h-full flex-1 items-center justify-center bg-linear-to-b from-[#e4f3fd] to-[#9ed3f6] pt-[2px]">拖拽上传</span>
  </button>
);

const Watermark = () => (
  <div className="pointer-events-none absolute top-[10px] left-[4px] flex items-start opacity-80">
    <svg width="60" height="58" viewBox="0 0 60 58">
      <circle cx="29" cy="28" r="26" fill="#2f86c6" />
      <path d="M14 14l12-8 2 4-9 7v9l8-2v10l-11 6-8-3 6-8zM32 20l14-5 6 5-12 4v22l-10 4V26z" fill="#fff" opacity=".85" />
      <path d="M4 41q26 18 44-6t5-16q7 12-2 26T24 57Q10 56 4 41z" fill="#f08a24" />
    </svg>
    <div>
      <div className="pt-[3px] text-[27px] leading-8 font-bold text-[#3d9be9]">河东软件园</div>
      <div className="font-['Liberation_Serif',serif] text-[20px] leading-6 font-bold text-[#3c9a34]">www.pc0359.cn</div>
    </div>
  </div>
);

const AppMark = () => (
  <svg width="16" height="16" viewBox="0 0 16 16"><rect width="16" height="16" rx="1" fill="#d9201c" /><path d="M3 3l3 2M5 2l2 4M9 3h4M11 2v5M3 8h10M4 11l2 2M8 9v5M12 10l-2 3" stroke="#fff" fill="none" /></svg>
);

const MENUS = ['文件(F)', '编辑(E)', '查看(V)', '页面(P)', '工具(T)', '窗口(W)', '帮助(H)'];

const FORMAT_DROPS: { label: string; icon: React.ReactNode }[] = [
  { label: '文字颜色', icon: <g><path d="M3 10L7.500 1 12 10M5 7h5M1 10.500h4M9 10.500h5" stroke={NAVY} strokeWidth="1.400" /><path d="M0 12h16v3H0z" fill="#000" stroke="none" /></g> },
  { label: '线条颜色', icon: <g><path d="M1 9q3-2 4 0l8-8 2 2-7 7H2z" fill={NAVY} stroke="none" /><path d="M12 0h3v3h-3z" fill="#ee0" stroke="none" /><path d="M0 12h16v3H0z" fill="#000" stroke="none" /></g> },
  { label: '填充颜色', icon: <g><path d="M2 7l5-5 5 5-5 5zM6 0v6" fill="#ddd" /><path d="M10 4q5 1 4 7l-3-4z" fill={NAVY} stroke="none" /></g> },
  { label: '线宽', icon: <path d="M0 3h16M0 7.500h16M0 12.500h16" strokeWidth="2" /> },
  { label: '线型', icon: <g><path d="M0 3.500h16" /><path d="M0 6.500h16M0 9.500h16" strokeDasharray="2 1" /><path d="M0 12.500h16" strokeDasharray="3 2" /></g> },
];

const ImeBar = () => (
  <div className="absolute right-0 bottom-0 flex h-7 items-end text-[#1f72c4]">
    <svg width="28" height="28" viewBox="0 0 28 28" className="z-10">
      <path d="M1 5L22 1q2 0 3 3l3 17q0 3-3 4L8 28q-3 0-4-3L0 8q0-2 1-3z" fill="#f4511e" />
      <path d="M21 8q-5-2-11 0-5 3 2 5 9 0 8 4-3 5-13 3" fill="none" stroke="#fff" strokeWidth="4" />
    </svg>
    <div className="mb-px flex h-6 items-center border border-[#b5c8dc] bg-[#f8fbff] pl-[2px]">
      {[
        <span className="text-[15px] leading-4 font-bold">中</span>,
        <svg width="16" height="16" viewBox="0 0 16 16"><circle cx="4" cy="5" r="2" fill="none" stroke="currentColor" strokeWidth="1.500" /><path d="M10 8h4v3q-1 3-4 4 2-2 1-3h-1z" fill="currentColor" /></svg>,
        <svg width="17" height="17" viewBox="0 0 17 17" fill="none" stroke="currentColor" strokeWidth="1.500"><circle cx="8.500" cy="8.500" r="7.500" /><path d="M4.500 10q4 5 8 0M6 5v3M11 5v3" /></svg>,
        <FaMicrophone size={15} />,
        <FaKeyboard size={17} />,
        <FaUser size={14} color="#b4c2d8" />,
        <FaTshirt size={16} />,
        <FaWrench size={15} />,
      ].map((icon, i) => (
        <span key={i} className="flex w-[22px] justify-center">{icon}</span>
      ))}
    </div>
  </div>
);

const App: React.FC = () => (
  <div className="relative flex h-screen w-full flex-col overflow-hidden bg-white font-['Liberation_Sans','Noto_Sans_CJK_SC',sans-serif] text-[12px] leading-4 text-black">
    <header className="shrink-0 bg-white">
      <div className="flex h-4 items-center justify-between pr-[18px] pl-[8px]">
        <div className="flex items-center gap-[5px] font-['Open_Sans','Noto_Sans_CJK_SC',sans-serif] text-[#999]">
          <AppMark />
          <h1>筑业--施工平面图布置软件 - [平面图1]</h1>
        </div>
        <WindowControls />
      </div>
      <div className="flex h-[27px] items-center justify-between pt-[6px] pr-px pl-[8px]">
        <nav className="flex items-center gap-[15px] font-['Open_Sans','Noto_Sans_CJK_SC',sans-serif] text-[#6b6b6b]">
          <span className="-mr-[9px] opacity-50"><AppMark /></span>
          {MENUS.map((m) => <button type="button" key={m}>{m}</button>)}
        </nav>
        <div className="flex gap-[2px] text-[#8796b0]">
          {['M2 7h6', 'M3 1h6v4H3zM1 4h6v5H1z', 'M1 1l7 7M8 1L1 8'].map((d, i) => (
            <button type="button" key={d} aria-label={['最小化图纸', '还原图纸', '关闭图纸'][i]} className="flex h-[17px] w-[17px] items-center justify-center bg-[#e6e6e6]">
              <svg width="10" height="10" viewBox="0 0 10 10" fill="none" stroke="currentColor" strokeWidth={i === 1 ? 1.200 : 2}><path d={d} /></svg>
            </button>
          ))}
        </div>
      </div>
    </header>

    <div className="shrink-0 border-y border-[#999] bg-linear-to-r from-[#dedede] to-[#f4f4f2]">
      <div className="flex h-[30px] items-center gap-px border-b border-[#a0a0a0] pl-[2px]">
        <Strip>
          {FILE_TOOLS.map((t) => (
            <ToolButton key={t.label} label={t.label} active={t.active}><Ico>{t.icon}</Ico></ToolButton>
          ))}
        </Strip>
        <Strip>
          {VIEW_TOOLS.map((t) => (
            <ToolButton key={t.label} label={t.label}><Ico>{t.icon}</Ico></ToolButton>
          ))}
          <span className="mx-1 h-[18px] w-px bg-[#a0a0a0]" />
          <Combo label="缩放比例" value="100" className="mr-[2px] w-[58px]" />
        </Strip>
      </div>
      <div className="flex h-[30px] items-center gap-[2px] pl-[2px]">
        <Strip>
          {TABLE_TOOLS.map((t) => (
            <ToolButton key={t.label} label={t.label}><Ico>{t.icon}</Ico></ToolButton>
          ))}
        </Strip>
        <Strip>
          <Combo label="字体" value="Times New Roman" className="mr-[2px] w-[108px] text-[11px]" />
          <Combo label="字号" value="12" className="w-10" />
          <button type="button" className="w-[23px] font-['Liberation_Serif',serif] text-[15px] font-bold">B</button>
          <button type="button" className="w-[23px] font-['Liberation_Serif',serif] text-[15px] font-bold italic">I</button>
          <button type="button" className="w-[23px] font-['Liberation_Serif',serif] text-[15px] font-bold underline">U</button>
          {FORMAT_DROPS.map((t) => (
            <button type="button" key={t.label} aria-label={t.label} className="flex w-[35px] items-center justify-between pr-1 pl-1">
              <Ico>{t.icon}</Ico>
              <Caret />
            </button>
          ))}
          <span className="w-6" />
        </Strip>
      </div>
    </div>

    <main className="flex min-h-0 flex-1">
      <LibraryPanel />
      <div className="w-[7px] shrink-0 bg-[#e4e4e4] px-[2px]">
        <div className="h-full w-[2px] bg-[repeating-linear-gradient(to_bottom,#a3a3a3_0_2px,transparent_2px_5px)]" />
      </div>
      <Workspace />
      <div className="flex w-[62px] shrink-0 items-start gap-px bg-linear-to-r from-[#dedede] to-[#f4f4f2]">
        <div className="flex w-[30px] flex-col items-center bg-linear-to-r from-white to-[#dcdcdc] pt-3">
          {DRAW_TOOLS.map((t, i) => (
            <button type="button" key={t.label} aria-label={t.label} className={`flex h-[23px] w-[23px] items-center justify-center ${i === 0 ? 'border border-[#3c8ff0] bg-[#d3e6fa]' : ''}`}>
              <Ico>{t.icon}</Ico>
            </button>
          ))}
          <SideGrip />
        </div>
        <div className="flex w-[29px] flex-col items-center bg-linear-to-r from-white to-[#dcdcdc] pt-[11px]">
          {SHAPE_TOOLS.map((t) => (
            <button type="button" key={t.label} aria-label={t.label} className="flex h-[22px] w-[23px] items-center justify-center">
              <Ico>{t.icon}</Ico>
            </button>
          ))}
          <SideGrip />
        </div>
      </div>
    </main>

    <div className="flex h-[31px] shrink-0 items-center border-b border-[#999] bg-linear-to-r from-[#dedede] to-[#f4f4f2] pb-px">
      <Strip>
        {ARRANGE.map((t) => (
          <ToolButton key={t.label} label={t.label}>
            <Ico>
              {t.f && <path d={t.f} fill={G} stroke="none" />}
              {t.s && <path d={t.s} stroke={G} />}
            </Ico>
          </ToolButton>
        ))}
      </Strip>
    </div>
    <footer className="flex h-[22px] shrink-0 items-center justify-between border-b border-black bg-linear-to-r from-[#dcdcdc] to-[#f4f3f1] pl-[2px]">
      <span className="pt-1">就绪</span>
      <div className="flex h-[18px] gap-[3px]">
        <span className="w-[202px] border border-[#a3a3a3]" />
        <span className="w-[241px] border border-[#a3a3a3]" />
        <span className="w-[337px] border border-[#a3a3a3]" />
      </div>
    </footer>

    <Watermark />
    <ChatWindow />
    <UploadBadge />
    <PrintDialog />
    <ImeBar />
  </div>
);

export default App;
